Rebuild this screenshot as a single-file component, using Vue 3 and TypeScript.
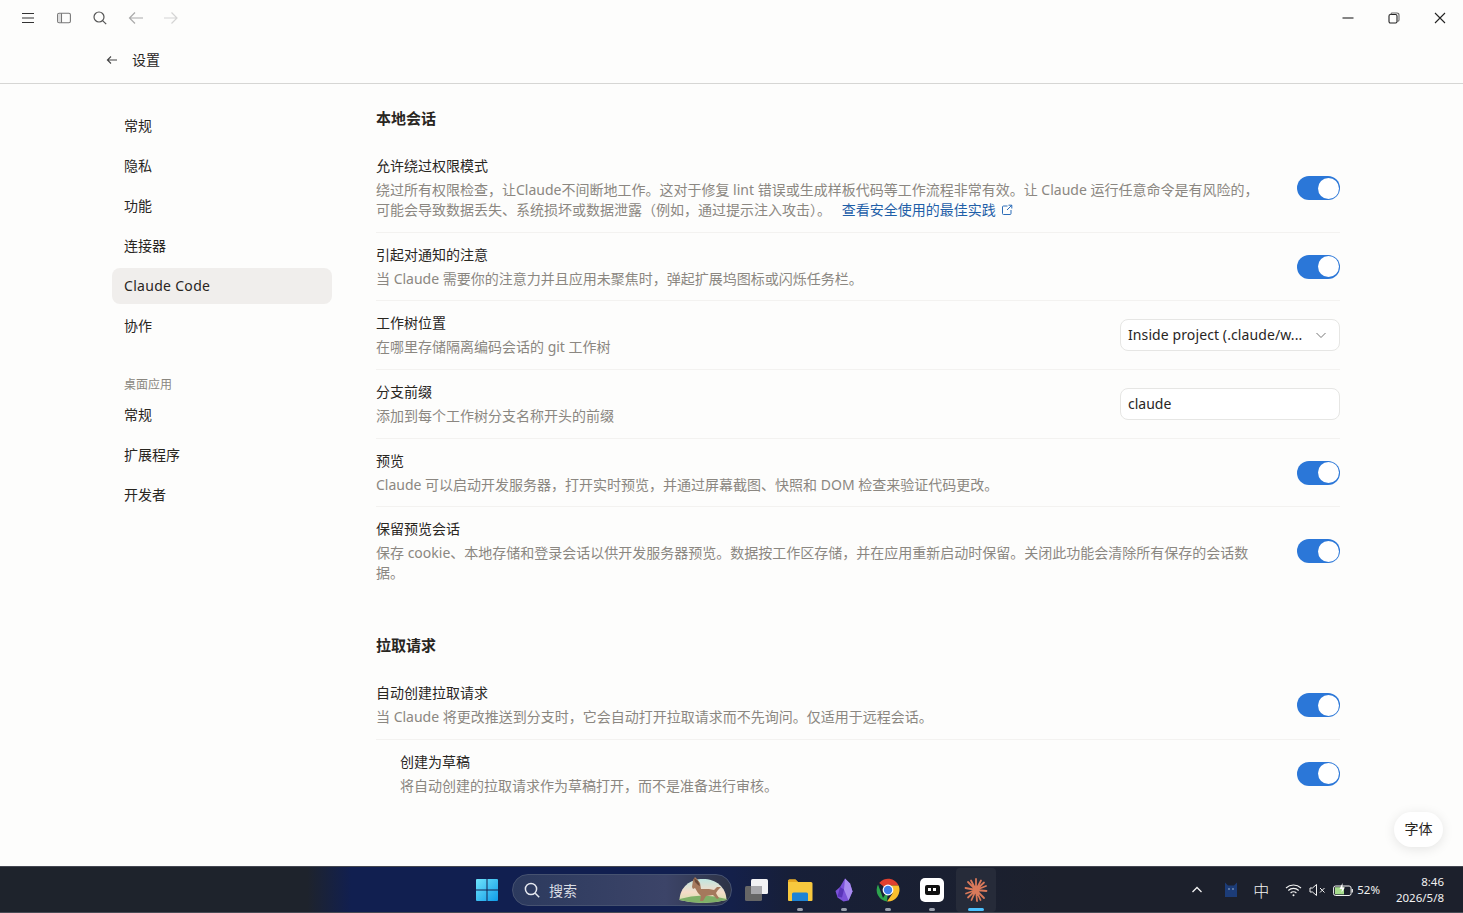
<template>
  <div class="app">
    <div class="titlebar">
      <div class="title-tools">
        <button class="tool-btn">
          <svg width="16" height="16" viewBox="0 0 16 16" fill="none" stroke="#333" stroke-width="1.2"><path d="M2 3.500h12M2 8h12M2 12.500h12" /></svg>
        </button>
        <button class="tool-btn">
          <svg width="16" height="16" viewBox="0 0 16 16" fill="none" stroke="#777" stroke-width="1.1"><rect x="1.600" y="3.200" width="12.800" height="9.600" rx="1.500" /><path d="M5.500 3.200v9.600" /><path d="M2 4h3v8H2z" fill="#ddd" stroke="none" /></svg>
        </button>
        <button class="tool-btn">
          <svg width="16" height="16" viewBox="0 0 16 16" fill="none" stroke="#555" stroke-width="1.2"><circle cx="7" cy="7" r="5" /><path d="M10.600 10.600l3.600 3.600" /></svg>
        </button>
        <button class="tool-btn">
          <svg width="16" height="16" viewBox="0 0 16 16" fill="none" stroke="#aaa" stroke-width="1.2"><path d="M15 8H1.500M7 2.500L1.500 8 7 13.500" /></svg>
        </button>
        <button class="tool-btn">
          <svg width="16" height="16" viewBox="0 0 16 16" fill="none" stroke="#d4d4d4" stroke-width="1.2"><path d="M-0.500 8H13M7.500 2.500L13 8 7.500 13.500" /></svg>
        </button>
      </div>
      <div class="win-controls">
        <button class="win-btn">
          <svg width="12" height="12" viewBox="0 0 12 12" stroke="#222" stroke-width="1.1"><path d="M0.500 6h11" /></svg>
        </button>
        <button class="win-btn">
          <svg width="12" height="12" viewBox="0 0 12 12" fill="none" stroke="#222" stroke-width="1.1"><rect x="1" y="2.500" width="8" height="8.500" rx="1.400" /><path d="M3 2.500V2a1.200 1.200 0 0 1 1.200-1h4.600A2 2 0 0 1 11 3v5a1.200 1.200 0 0 1-1.200 1.200H9" stroke="#666" /></svg>
        </button>
        <button class="win-btn">
          <svg width="12" height="12" viewBox="0 0 12 12" stroke="#222" stroke-width="1.1"><path d="M1 1l10 10M11 1L1 11" /></svg>
        </button>
      </div>
    </div>

    <div class="page-header">
      <svg width="16" height="16" viewBox="0 0 16 16" fill="none" stroke="#444" stroke-width="1.1"><path d="M13 8H3.400M7 4.500L3.400 8 7 11.500" /></svg>
      <span class="page-title">设置</span>
    </div>

    <div class="body">
      <nav class="sidebar">
        <a v-for="item in navTop" :key="item" class="nav-item" :class="{ active: item === 'Claude Code' }">{{ item }}</a>
        <div class="nav-label">桌面应用</div>
        <a v-for="item in navDesktop" :key="item" class="nav-item">{{ item }}</a>
      </nav>

      <main class="content">
        <section v-for="section in sections" :key="section.title" class="section">
          <h2>{{ section.title }}</h2>
          <div
            v-for="row in section.rows"
            :key="row.title"
            class="row"
            :class="{ nested: row.nested }"
          >
            <div class="row-text">
              <div class="row-title">{{ row.title }}</div>
              <div class="row-desc">
                {{ row.desc }}
                <a v-if="row.link" class="link">{{ row.link }}<svg class="ext" width="12" height="12" viewBox="0 0 12 12" fill="none" stroke="#2b6cb8" stroke-width="1"><path d="M6.500 2H2.500A1 1 0 0 0 1.500 3v6.500a1 1 0 0 0 1 1H9a1 1 0 0 0 1-1V6" /><path d="M7.500 1.200h3.300v3.300M10.800 1.200L6 6" /></svg></a>
              </div>
            </div>
            <div v-if="row.control === 'toggle'" class="toggle"><span class="knob" /></div>
            <div v-else-if="row.control === 'select'" class="field">
              <span class="field-text wide">Inside project (.claude/w...</span>
              <svg width="12" height="12" viewBox="0 0 12 12" fill="none" stroke="#777" stroke-width="1"><path d="M1.500 4l4.500 4.500L10.500 4" /></svg>
            </div>
            <div v-else class="field"><span class="field-text">claude</span></div>
          </div>
        </section>
      </main>

      <button class="font-btn">字体</button>
    </div>

    <footer class="taskbar">
      <div class="task-center">
        <svg class="task-icon start" width="24" height="24" viewBox="0 0 24 24">
          <defs>
            <linearGradient id="win" x1="0" y1="0" x2="1" y2="1"><stop offset="0" stop-color="#6fe3fb" /><stop offset="1" stop-color="#0f9be8" /></linearGradient>
          </defs>
          <path d="M1 2a1 1 0 0 1 1-1h9.500v10.500H1zM12.500 1H22a1 1 0 0 1 1 1v9.500H12.500zM1 12.500h10.500V23H2a1 1 0 0 1-1-1zM12.500 12.500H23V22a1 1 0 0 1-1 1h-9.500z" fill="url(#win)" />
        </svg>
        <div class="search-pill">
          <svg width="18" height="18" viewBox="0 0 18 18" fill="none" stroke="#e6e9f0" stroke-width="1.500"><circle cx="8" cy="8" r="5.600" /><path d="M12.200 12.200l4 4" /></svg>
          <span>搜索</span>
          <svg class="horse" width="48" height="28" viewBox="0 0 48 28">
            <defs>
              <linearGradient id="sky" x1="0" y1="0" x2="0" y2="1"><stop offset="0" stop-color="#bfe6e0" /><stop offset="0.55" stop-color="#f6dcc8" /><stop offset="1" stop-color="#cfe0a8" /></linearGradient>
            </defs>
            <path d="M0.500 24C1 11 11 3 24 3s23 8 23.500 21q-23.500 6-47 0z" fill="url(#sky)" />
            <path d="M0.500 23q23-7 47 0v1q-23.500 6-47 0z" fill="#7fb068" />
            <path d="M13 11l1-7 2-3 2 2 3 4 1 6 8 0 5 1 3-3 4 0-3 3-2 3 1 2 2 3-2 1-4-4-7 1-3 5-3 0 1-5-3-3-3-5-2 1z" fill="#a5795c" />
            <path d="M15 2l4 3 2 5-2-1-3-3z" fill="#6a4a38" />
          </svg>
        </div>
        <div class="task-slot">
          <svg width="24" height="24" viewBox="0 0 24 24"><rect x="1" y="8" width="17" height="15" rx="1.500" fill="#666" /><rect x="7" y="1" width="17" height="15" rx="1.500" fill="#f2f2f4" /><rect x="7" y="8" width="11" height="8" fill="#a8a8ac" /></svg>
        </div>
        <div class="task-slot running">
          <svg width="26" height="24" viewBox="0 0 26 24"><path d="M1 3a1.500 1.500 0 0 1 1.500-1.500h6L11 4h13a1.500 1.500 0 0 1 1.500 1.500V22a1 1 0 0 1-1 1H2a1 1 0 0 1-1-1z" fill="#f7c83e" /><path d="M1 3a1.500 1.500 0 0 1 1.500-1.500h6L11 4H1z" fill="#e5a520" /><path d="M5 16a1.500 1.500 0 0 1 1.500-1.500h13A1.500 1.500 0 0 1 21 16v7H5z" fill="#1d83d4" /></svg>
        </div>
        <div class="task-slot running">
          <svg width="18" height="24" viewBox="0 0 18 24"><path d="M10 0.500l5 5 2.500 8-4 9-5 1-6-4L0.500 13 5 9z" fill="#7b52d8" /><path d="M10 0.500l-1 11 4.500 11 4-9-2.500-8z" fill="#a98cf0" /><path d="M5 9l4 2.500-2 8-4.500-1z" fill="#5a34b8" /></svg>
        </div>
        <div class="task-slot running">
          <svg width="24" height="24" viewBox="0 0 24 24">
            <path d="M12 12L3.200 5A11.500 11.500 0 0 1 22.600 7.500H12z" fill="#e0402f" />
            <path d="M12 12L7 20 2 6.500A11.500 11.500 0 0 0 11 23.400z" fill="#2da44e" />
            <path d="M12 7.500h10.600A11.500 11.500 0 0 1 11 23.400l5.500-8z" fill="#fbc02d" />
            <circle cx="12" cy="12" r="5.400" fill="#fff" /><circle cx="12" cy="12" r="4.200" fill="#3f7fe8" />
          </svg>
        </div>
        <div class="task-slot running">
          <div class="app-tile"><span class="tile-mark"><i /><i /></span></div>
        </div>
        <div class="task-slot active">
          <svg width="24" height="24" viewBox="0 0 24 24" stroke="#d9795a" stroke-width="1.800" stroke-linecap="round"><path d="M12 12V1M12 12l1 11M12 12L1.500 10M12 12l10.500 1M12 12L4 4M12 12l8 8M12 12L20 4.500M12 12l-8 7.500M12 12L7 2.500M12 12l4.500 10M12 12L17 2.500M12 12L7.500 22M12 12L2 15.500M12 12l10-4" /></svg>
        </div>
      </div>

      <div class="tray">
        <svg class="chev" width="12" height="12" viewBox="0 0 12 12" fill="none" stroke="#f2f2f2" stroke-width="1.300"><path d="M1.500 8L6 3.500 10.500 8" /></svg>
        <svg class="cat" width="18" height="18" viewBox="0 0 18 18"><path d="M3 1.500l3 3h6l3-3V16H3z" fill="#1c3c78" /><circle cx="7" cy="8" r=".7" fill="#cde" /><circle cx="11" cy="8" r=".7" fill="#cde" /></svg>
        <span class="ime">中</span>
        <svg class="wifi" width="17" height="14" viewBox="0 0 17 14" fill="none" stroke="#f2f2f2" stroke-width="1.100"><path d="M1 5a11 11 0 0 1 15 0M3.300 7.500a7.500 7.500 0 0 1 10.400 0M5.600 10a4 4 0 0 1 5.800 0" /><circle cx="8.500" cy="12.300" r="1" fill="#f2f2f2" stroke="none" /></svg>
        <svg class="mute" width="17" height="14" viewBox="0 0 17 14" fill="none" stroke="#f2f2f2" stroke-width="1"><path d="M1 5h2.500L7.500 1.500v11L3.500 9H1z" /><path d="M11 5l4.500 4.500M15.500 5L11 9.500" /></svg>
        <svg class="batt" width="21" height="14" viewBox="0 0 21 14" fill="none"><rect x=".6" y="3" width="17.500" height="9.500" rx="2" stroke="#f2f2f2" /><path d="M2 4.200h9v7.100H2z" fill="#a6dc8c" /><path d="M19.300 6v3.500" stroke="#f2f2f2" stroke-width="1.200" /><path d="M9.500 0L6.500 6h2.500L8.500 9.500 12 4.500H9.500z" fill="#fff" /></svg>
        <span class="pct">52%</span>
        <div class="clock"><span>8:46</span><span>2026/5/8</span></div>
      </div>
    </footer>
  </div>
</template>

<script setup lang="ts">
type Control = 'toggle' | 'select' | 'input'

interface Row {
  title: string
  desc: string
  control: Control
  link?: string
  nested?: boolean
}

const navTop = ['常规', '隐私', '功能', '连接器', 'Claude Code', '协作']
const navDesktop = ['常规', '扩展程序', '开发者']

const sections: { title: string; rows: Row[] }[] = [
  {
    title: '本地会话',
    rows: [
      {
        title: '允许绕过权限模式',
        desc: '绕过所有权限检查，让Claude不间断地工作。这对于修复 lint 错误或生成样板代码等工作流程非常有效。让 Claude 运行任意命令是有风险的，可能会导致数据丢失、系统损坏或数据泄露（例如，通过提示注入攻击）。',
        link: '查看安全使用的最佳实践',
        control: 'toggle',
      },
      {
        title: '引起对通知的注意',
        desc: '当 Claude 需要你的注意力并且应用未聚焦时，弹起扩展坞图标或闪烁任务栏。',
        control: 'toggle',
      },
      { title: '工作树位置', desc: '在哪里存储隔离编码会话的 git 工作树', control: 'select' },
      { title: '分支前缀', desc: '添加到每个工作树分支名称开头的前缀', control: 'input' },
      {
        title: '预览',
        desc: 'Claude 可以启动开发服务器，打开实时预览，并通过屏幕截图、快照和 DOM 检查来验证代码更改。',
        control: 'toggle',
      },
      {
        title: '保留预览会话',
        desc: '保存 cookie、本地存储和登录会话以供开发服务器预览。数据按工作区存储，并在应用重新启动时保留。关闭此功能会清除所有保存的会话数据。',
        control: 'toggle',
      },
    ],
  },
  {
    title: '拉取请求',
    rows: [
      {
        title: '自动创建拉取请求',
        desc: '当 Claude 将更改推送到分支时，它会自动打开拉取请求而不先询问。仅适用于远程会话。',
        control: 'toggle',
      },
      {
        title: '创建为草稿',
        desc: '将自动创建的拉取请求作为草稿打开，而不是准备进行审核。',
        control: 'toggle',
        nested: true,
      },
    ],
  },
]
</script>

<style>
html,
body {
  margin: 0;
  height: 100%;
  overflow: hidden;
  background: #fdfdfc;
}
</style>

<style scoped>
.app {
  height: 913px;
  display: flex;
  flex-direction: column;
  font-family: 'Noto Sans', 'Noto Sans CJK SC', sans-serif;
  font-size: 14px;
  color: #29261f;
  background: #fdfdfc;
}

.titlebar {
  height: 36px;
  flex: none;
  display: flex;
  justify-content: space-between;
}

.title-tools {
  display: flex;
  padding-left: 10px;
}

.tool-btn,
.win-btn {
  background: none;
  border: none;
  padding: 0;
  display: flex;
  align-items: center;
  justify-content: center;
  height: 36px;
}

.tool-btn {
  width: 36px;
}

.win-btn {
  width: 46px;
}

.win-controls {
  display: flex;
}

.page-header {
  height: 47px;
  flex: none;
  box-sizing: content-box;
  display: flex;
  align-items: center;
  gap: 12px;
  padding-left: 104px;
  border-bottom: 1px solid #d6d6d4;
}

.page-title {
  font-size: 14px;
  line-height: 20px;
}

.body {
  flex: 1;
  min-height: 0;
  display: flex;
  position: relative;
  padding-left: 112px;
}

.sidebar {
  width: 220px;
  flex: none;
  padding-top: 24px;
  display: flex;
  flex-direction: column;
  gap: 4px;
}

.nav-item {
  height: 36px;
  line-height: 36px;
  padding-left: 12px;
  border-radius: 8px;
}

.nav-item.active {
  background: #f0eeec;
  letter-spacing: 0.3px;
}

.nav-label {
  font-size: 12px;
  line-height: 16px;
  color: #8a8780;
  padding: 29px 0 0 12px;
}

.content {
  width: 964px;
  margin-left: 44px;
  padding-top: 24px;
}

.section + .section {
  margin-top: 40px;
}

h2 {
  margin: 0 0 16px;
  font-size: 15px;
  line-height: 20px;
  font-weight: 700;
}

.row {
  display: flex;
  align-items: center;
  justify-content: space-between;
  padding: 12px 0 11.700px;
  border-bottom: 1px solid #f3f2f0;
}

.row:last-child {
  border-bottom: none;
}

.row.nested .row-text {
  padding-left: 24px;
  box-sizing: border-box;
}

.row-text {
  width: 885px;
}

.row-title {
  line-height: 20px;
}

.row-desc {
  margin-top: 4px;
  line-height: 20px;
  color: #8b8781;
}

.link {
  color: #1f5fa8;
  margin-left: 7px;
}

.ext {
  margin-left: 5px;
  vertical-align: -1px;
}

.toggle {
  width: 43px;
  height: 24px;
  flex: none;
  border-radius: 12px;
  background: #2b77d8;
  display: flex;
  align-items: center;
  justify-content: flex-end;
  padding-right: 1.500px;
  box-sizing: border-box;
}

.knob {
  width: 21px;
  height: 21px;
  border-radius: 50%;
  background: #fff;
}

.field {
  width: 220px;
  height: 32px;
  flex: none;
  box-sizing: border-box;
  border: 1px solid #e6e6e4;
  border-radius: 8px;
  background: #fff;
  display: flex;
  align-items: center;
  justify-content: space-between;
  padding: 0 12px 1px 7px;
}

.field-text {
  font-size: 14px;
  line-height: 20px;
  white-space: nowrap;
}

.field-text.wide {
  letter-spacing: 0.1px;
}

.font-btn {
  position: absolute;
  right: 20px;
  top: 728px;
  width: 49px;
  height: 35px;
  border: none;
  border-radius: 18px;
  background: #fff;
  box-shadow: 0 2px 12px rgba(0, 0, 0, 0.1);
  font: inherit;
  color: #29261f;
  padding: 0 0 3px;
}

.taskbar {
  height: 47px;
  flex: none;
  box-sizing: border-box;
  border-top: 1px solid #444751;
  border-bottom: 1px solid #484b55;
  background: linear-gradient(90deg, #1e232c 0, #1e232c 21%, #111f50 24%, #111f50 46%, #14204a 50%, #171f38 54%, #1c202c 72%, #1c202c 100%);
  display: flex;
  align-items: center;
  position: relative;
  color: #f2f2f2;
}

.task-center {
  display: flex;
  align-items: center;
  margin-left: 475px;
}

.start {
  margin-right: 13px;
}

.search-pill {
  width: 220px;
  height: 32px;
  box-sizing: border-box;
  border-radius: 16px;
  background: linear-gradient(90deg, #2c3a5e, #3c4468 70%, #2d3346);
  border: 1px solid #465270;
  display: flex;
  align-items: center;
  padding-left: 10px;
  gap: 8px;
  color: #d9dce4;
  margin-right: 2px;
}

.horse {
  margin-left: auto;
  margin-right: 4px;
}

.task-slot {
  width: 44px;
  height: 44px;
  position: relative;
  display: flex;
  align-items: center;
  justify-content: center;
}

.task-slot.running::after,
.task-slot.active::after {
  content: '';
  position: absolute;
  bottom: 1px;
  left: 50%;
  width: 6px;
  height: 3px;
  margin-left: -3px;
  border-radius: 2px;
  background: #9aa0ac;
}

.task-slot.active {
  background: #262b39;
  border-radius: 4px;
  width: 40px;
  margin-left: 2px;
}

.task-slot.active::after {
  width: 16px;
  margin-left: -8px;
  background: #4cc2ff;
}

.app-tile {
  width: 24px;
  height: 24px;
  border-radius: 5px;
  background: #fff;
  display: flex;
  align-items: center;
  justify-content: center;
}

.tile-mark {
  width: 15px;
  height: 10px;
  background: #111;
  border-radius: 2px;
  display: flex;
  justify-content: center;
  align-items: center;
  gap: 2px;
}

.tile-mark i {
  width: 3px;
  height: 3px;
  background: #fff;
}

.tray {
  margin-left: auto;
  display: flex;
  align-items: center;
  padding-right: 19px;
  font-size: 12px;
}

.chev {
  margin-right: 19px;
}

.cat {
  margin-right: 13px;
}

.ime {
  font-size: 16px;
  font-weight: 300;
  margin-right: 16px;
}

.wifi {
  margin-right: 7px;
}

.mute {
  margin-right: 7px;
}

.pct {
  font-size: 11.500px;
  margin-left: 3px;
  margin-right: 16px;
}

.clock {
  display: flex;
  flex-direction: column;
  align-items: flex-end;
  line-height: 16px;
  font-size: 11.500px;
}
</style>
